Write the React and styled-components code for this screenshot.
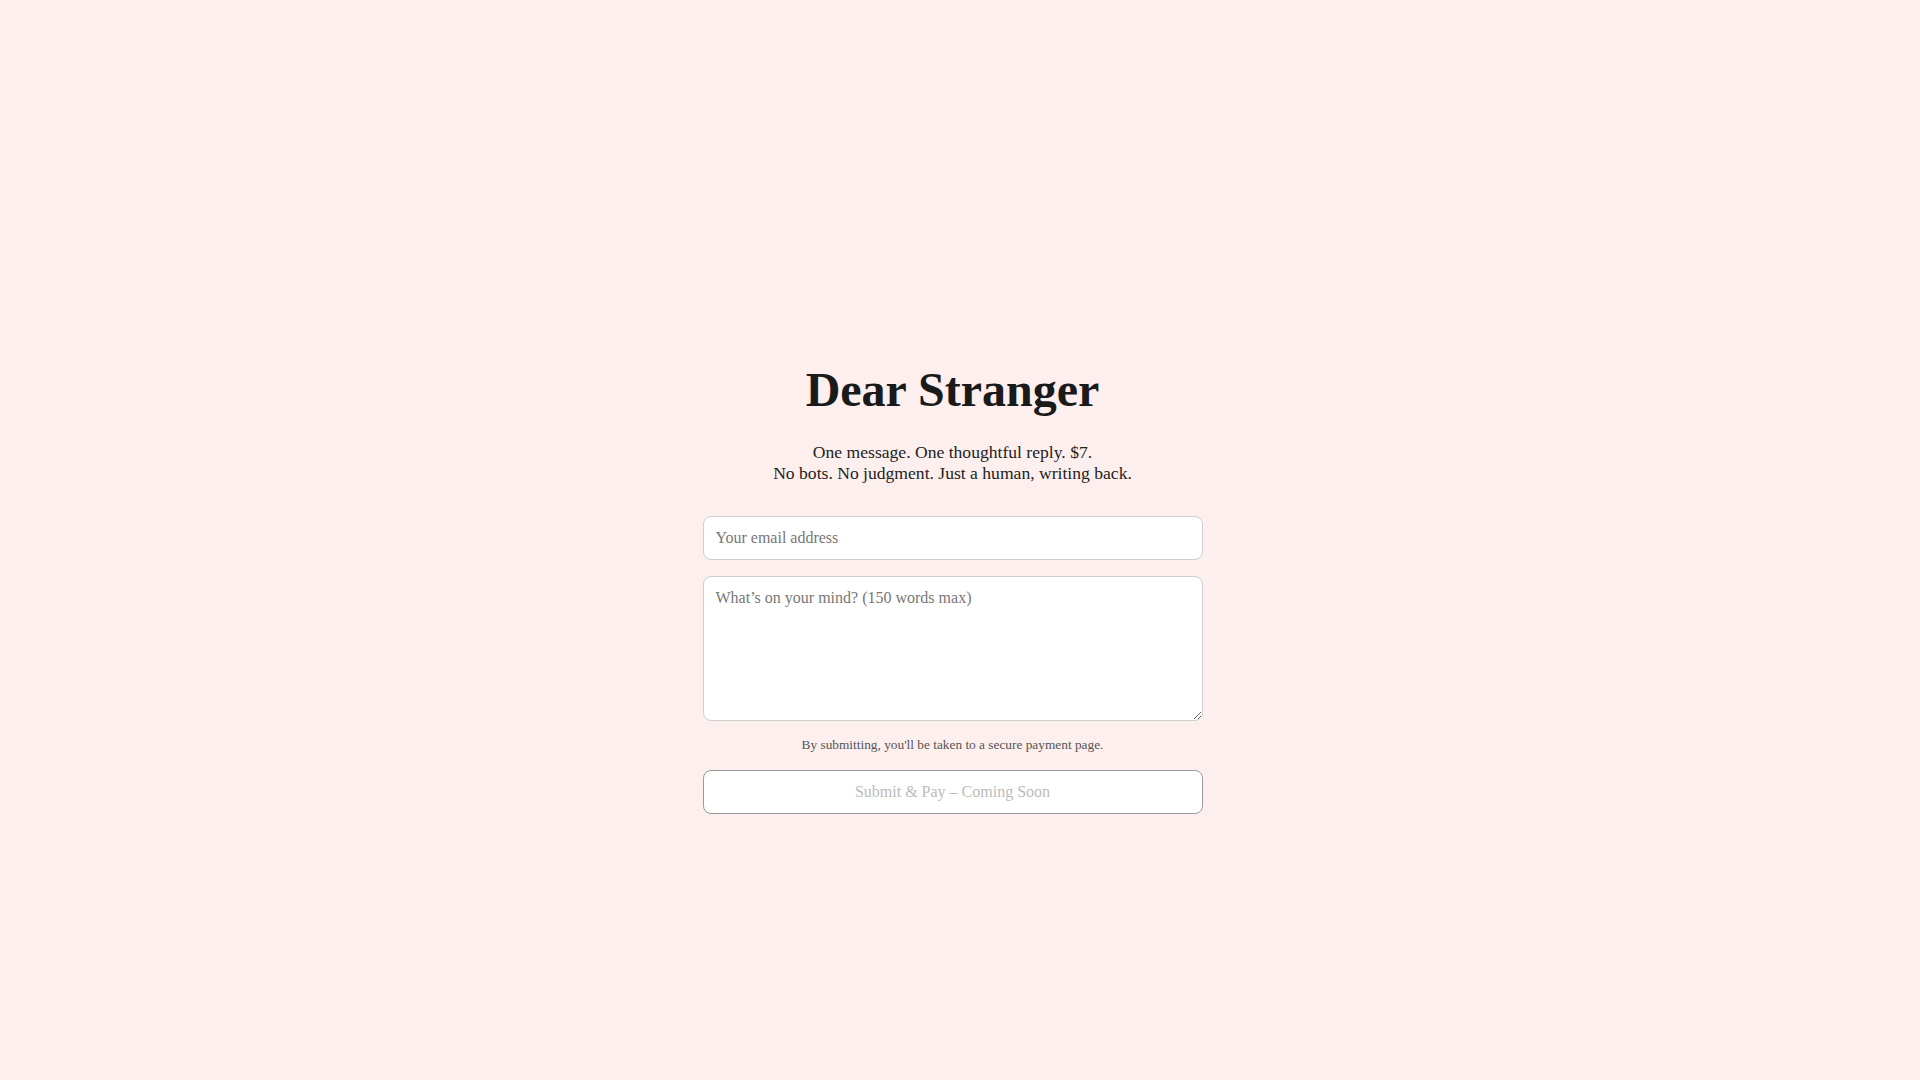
import styled, { createGlobalStyle } from "styled-components";

const GlobalStyle = createGlobalStyle`
  html, body {
    margin: 0;
    padding: 0;
    background: #fdefee;
  }
  body {
    font-family: "Liberation Serif", "Times New Roman", serif;
    color: #1a1a1a;
  }
`;

const App = () => {
  return (
    <>
      <GlobalStyle />
      <Page>
        <Card>
          <Title>Dear Stranger</Title>
          <Tagline>
            One message. One thoughtful reply. $7.
            <br />
            No bots. No judgment. Just a human, writing back.
          </Tagline>
          <Form onSubmit={(e) => e.preventDefault()}>
            <Field type="email" placeholder="Your email address" />
            <MessageBox placeholder="What’s on your mind? (150 words max)" />
            <Note>By submitting, you'll be taken to a secure payment page.</Note>
            <SubmitButton type="submit" disabled>
              Submit &amp; Pay – Coming Soon
            </SubmitButton>
          </Form>
        </Card>
      </Page>
    </>
  );
};

export default App;

// extra right padding keeps the column where it sits beside a 15px scrollbar
const Page = styled.main`
  min-height: 100vh;
  padding: 2rem calc(1rem + 15px) 2rem 1rem;
  display: flex;
  flex-direction: column;
  align-items: center;
  justify-content: center;
`;

const Card = styled.div`
  width: 500px;
  max-width: 100%;
  text-align: center;
`;

const Title = styled.h1`
  margin: 31px 0 23px;
  font-size: 48px;
  line-height: 1.2;
  font-weight: 700;
  color: #1a1a1a;
`;

const Tagline = styled.p`
  margin: 0 0 32px;
  font-size: 1.1rem;
  line-height: 1.2;
  color: #222;
`;

const Form = styled.form`
  display: flex;
  flex-direction: column;
`;

const inputBase = `
  box-sizing: border-box;
  width: 100%;
  padding: 12px;
  border: 1px solid #cfcfcf;
  border-radius: 8px;
  background: #fff;
  font-family: "Liberation Serif", "Times New Roman", serif;
  font-size: 16px;
  color: #222;
  outline: none;
  &::placeholder {
    color: #777;
  }
`;

const Field = styled.input`
  ${inputBase}
  height: 44px;
  margin-bottom: 16px;
`;

const MessageBox = styled.textarea`
  ${inputBase}
  height: 145px;
  resize: vertical;
  display: block;
`;

const Note = styled.p`
  margin: 16px 0 18px;
  font-size: 13.33px;
  line-height: 1.15;
  color: #555;
`;

const SubmitButton = styled.button`
  box-sizing: border-box;
  width: 100%;
  height: 44px;
  padding: 12px;
  border: 1px solid #999;
  border-radius: 8px;
  background: #fff;
  font-family: "Liberation Serif", "Times New Roman", serif;
  font-size: 16px;
  color: #bbb;
  cursor: not-allowed;
`;
